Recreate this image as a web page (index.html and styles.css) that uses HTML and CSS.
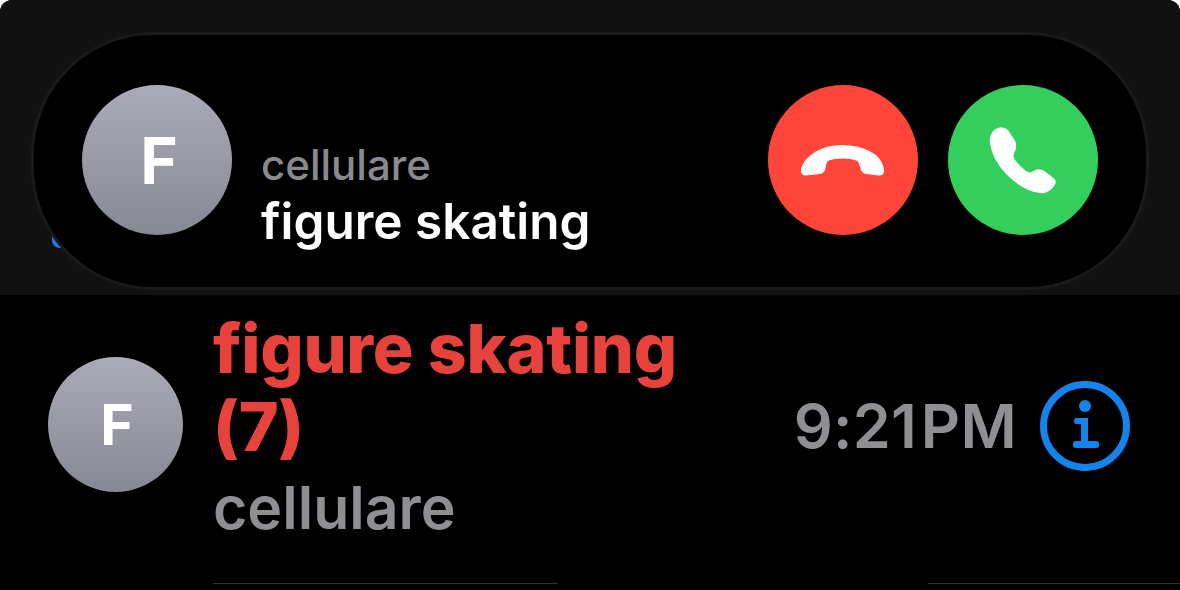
FILE: index.html
```html
<!DOCTYPE html>
<html lang="it">
<head>
<meta charset="utf-8">
<title>Incoming call</title>
<link rel="stylesheet" href="styles.css">
</head>
<body>
<div class="screen">
  <section class="banner">
    <span class="peek"></span>
    <div class="pill">
      <div class="avatar avatar-large">F</div>
      <div class="caller">
        <div class="caller-type">cellulare</div>
        <div class="caller-name">figure skating</div>
      </div>
      <div class="actions">
        <button class="round decline" aria-label="Decline">
          <svg class="handset" viewBox="0 0 150 150" width="150" height="150"><path d="M33.5 84C35 78 40 72 48 67C56 63 65 60.7 74 60.7C84 60.7 94 63 102 67C110 71 114 77 115.5 84C116 88 114 90 111 90L98 88.5C95 88 93.5 86 93 83L91.5 78C91 76 89 75 87 74.5C83 73.5 78 73 74 73C70 73 66 73.5 62 74.5C60 75 58.5 76 58 78L57 83C56.5 86 55 88 52 88.5L38 90C35 90 33 88 33.5 84Z"/></svg>
        </button>
        <button class="round accept" aria-label="Accept">
          <svg class="handset" viewBox="0 0 150 150" width="150" height="150"><path d="M50 43.5C45 45 41.5 51 42.5 58C44 69 50 80 59 89C69 99 81 106 92 107.5C99 108.5 105 103 107 98C107.5 96 106 94 104 92.5L96 86.5C92 84 88 85 85 87C83 88.5 80 88 77.5 86.5C73 83 69 79 66 74.5C64.5 72 64.5 69.5 66 67C68 63.5 68 59.5 66.5 56L60 46C57 43 53 42.5 50 43.5Z"/></svg>
        </button>
      </div>
    </div>
  </section>
  <section class="recent">
    <div class="avatar avatar-small">F</div>
    <div class="recent-main">
      <div class="recent-text">
        <div class="recent-name">figure skating (7)</div>
        <div class="recent-type">cellulare</div>
      </div>
      <div class="recent-time">9:21 PM</div>
      <svg class="info" viewBox="0 0 90 90" width="90" height="90" aria-label="Info">
        <circle cx="45" cy="45" r="41.5" fill="none" stroke="#1583ec" stroke-width="7"/>
        <circle cx="45" cy="25" r="6" fill="#1583ec"/>
        <path fill="#1583ec" d="M36 37H48V60H56C58 60 59 61 59 63V65C59 66 58 67 56 67H36C34 67 33 66 33 65V63C33 61 34 60 36 60H41V43H36C35 43 34 42 34 40C34 38 35 37 36 37Z"/>
      </svg>
    </div>
  </section>
</div>
</body>
</html>
```
FILE: styles.css
```css
* { box-sizing: border-box; }
html, body { margin: 0; padding: 0; background: #fff; }
body { width: 1180px; height: 590px; overflow: hidden; font-family: Inter, "Liberation Sans", sans-serif; }

.screen { width: 1180px; height: 590px; background: #000; border-radius: 12px 12px 0 0; overflow: hidden; }

.banner { position: relative; height: 295px; padding: 32px 31px 0 31px; background: #111112; }
.peek { position: absolute; left: 52px; top: 226px; width: 14px; height: 22px; background: #1a7fe0; border-radius: 8px 0 0 8px; filter: blur(0.6px); }
.pill {
  position: relative;
  display: flex;
  align-items: center;
  height: 258px;
  padding: 0 48px 0 48px;
  background: #000;
  border: 3px solid #1a1a1b;
  border-radius: 122px;
}

.avatar {
  display: flex;
  align-items: center;
  justify-content: center;
  flex: none;
  border-radius: 50%;
  color: #fff;
  font-weight: 700;
  background: linear-gradient(#ababb7, #868892);
}
.avatar-large { width: 150px; height: 150px; padding-left: 4px; font-size: 64px; margin-top: -2px; }
.avatar-small { width: 135px; height: 135px; padding-left: 3px; font-size: 57px; margin-top: 62px; }

.caller { margin: 64px 0 0 29px; flex: 1; }
.caller-type { font-size: 42px; line-height: 56px; font-weight: 500; color: #8a8a8e; }
.caller-name { font-size: 49.5px; line-height: 57px; font-weight: 600; color: #fff; }

.actions { display: flex; gap: 30px; margin-top: -2px; }
.round { display: block; width: 150px; height: 150px; padding: 0; border: 0; border-radius: 50%; }
.round svg { display: block; }
.handset path { fill: #fff; stroke: #fff; stroke-width: 1.2; stroke-linejoin: round; }
.decline { background: #ff453a; }
.accept { background: #34ce5c; }

.recent { display: flex; align-items: flex-start; height: 295px; padding-left: 48px; }
.recent-main {
  display: flex;
  align-items: center;
  flex: 1;
  height: 289px;
  margin-left: 30px;
  padding: 0 50px 28px 0;
  background: linear-gradient(to right, #333335 345px, transparent 345px, transparent 715px, #333335 715px) no-repeat left bottom / 100% 1px;
}
.recent-text { flex: 1; align-self: flex-start; padding-top: 14px; filter: blur(0.6px); }
.recent-name { width: 500px; font-size: 68px; line-height: 78px; font-weight: 800; letter-spacing: -0.3px; color: #e8423c; }
.recent-type { font-size: 59px; line-height: 86px; font-weight: 600; color: #8e8e93; }
.recent-time { font-size: 61px; font-weight: 600; color: #8e8e93; word-spacing: -12px; letter-spacing: 0.3px; margin-right: 23px; filter: blur(0.5px); }
.info { flex: none; filter: blur(0.4px); }
```
